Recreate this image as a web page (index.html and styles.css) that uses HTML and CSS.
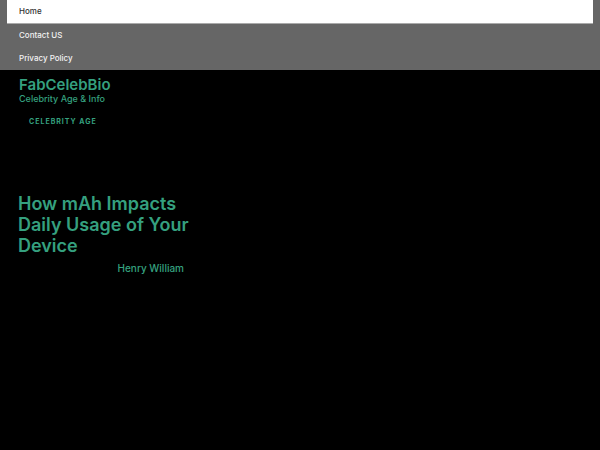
FILE: index.html
```html
<!DOCTYPE html>
<html>
<head>
<meta charset="utf-8">
<link rel="stylesheet" href="styles.css">
</head>
<body>
<nav class="menu">
  <a class="item active" href="#">Home</a>
  <a class="item" href="#">Contact US</a>
  <a class="item" href="#">Privacy Policy</a>
</nav>
<header class="brand">
  <div class="site-title">FabCelebBio</div>
  <div class="tagline">Celebrity Age &amp; Info</div>
  <div class="category">CELEBRITY AGE</div>
</header>
<main class="post">
  <h1 class="post-title">How mAh Impacts Daily Usage of Your Device</h1>
  <div class="author">Henry William</div>
</main>
</body>
</html>
```
FILE: styles.css
```css
html, body {
  margin: 0;
  padding: 0;
  background: #000;
  font-family: Inter, "Noto Sans", sans-serif;
}
.menu {
  background: #666;
  padding: 0 7px 0 7px;
  height: 70px;
  display: flex;
  flex-direction: column;
}
.item {
  display: block;
  height: 23px;
  line-height: 23px;
  padding-left: 12px;
  font-size: 8px;
  font-weight: 500;
  color: #f2f2f2;
  text-decoration: none;
}
.item.active {
  background: #fff;
  color: #333;
  border-bottom: 1px solid #aaa;
  height: 23px;
}
.brand {
  padding: 6px 19px 0 19px;
}
.site-title {
  color: #35a07f;
  font-size: 15px;
  font-weight: 600;
  line-height: 17px;
}
.tagline {
  color: #35a07f;
  font-size: 9px;
  font-weight: 500;
  line-height: 12px;
}
.category {
  color: #35a07f;
  font-size: 7px;
  font-weight: 700;
  letter-spacing: 1px;
  margin: 12px 0 0 10px;
}
.post {
  width: 172px;
  padding: 67px 0 0 18px;
}
.post-title {
  margin: 0;
  color: #35a07f;
  font-size: 18px;
  line-height: 21px;
  font-weight: 600;
}
.author {
  color: #35a07f;
  font-size: 10px;
  font-weight: 500;
  text-align: right;
  margin-top: 6px;
  padding-right: 6px;
}
```
